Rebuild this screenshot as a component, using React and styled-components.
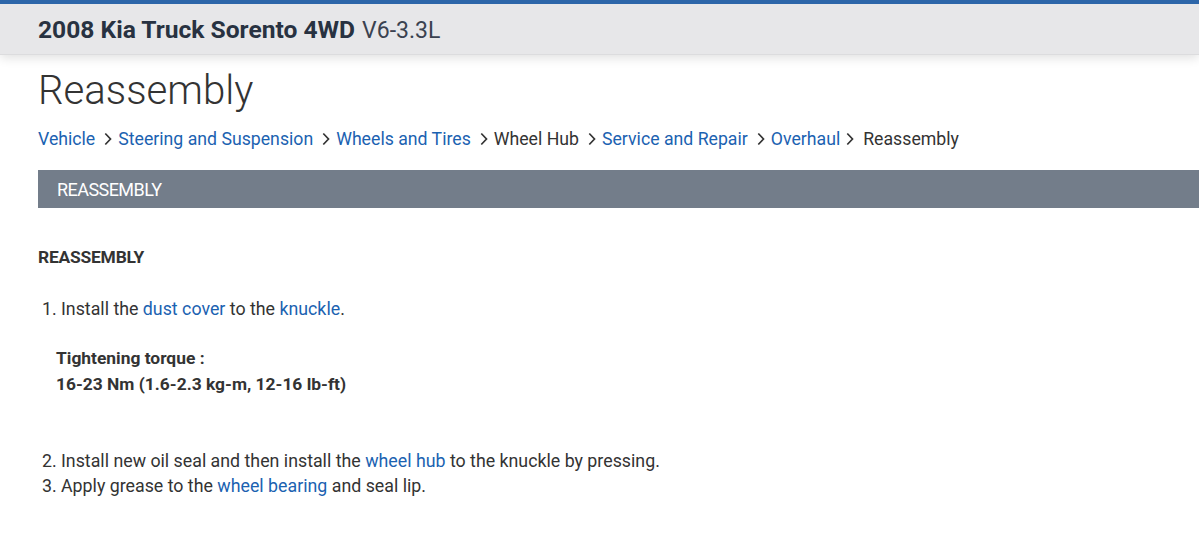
import React from "react";
import styled, { createGlobalStyle } from "styled-components";

const Global = createGlobalStyle`
  html, body { margin: 0; padding: 0; background: #fff; }
  body { font-family: Roboto, "Noto Sans", sans-serif; color: #333; overflow: hidden; }
`;

const Header = styled.header`
  border-top: 4px solid #2d66a9;
  background: #e7e7e9;
  height: 55px;
  box-sizing: border-box;
  display: flex;
  align-items: center;
  padding: 0 0 0 38px;
  box-shadow: 0 3px 10px rgba(0, 0, 0, 0.12);
  border-bottom: 1px solid #dcdcde;
`;

const Vehicle = styled.h1`
  margin: 0;
  font-size: 24.6px;
  font-weight: 700;
  color: #283241;
  letter-spacing: 0;
`;

const Engine = styled.span`
  font-weight: 400;
  font-size: 23px;
  color: #3a4250;
  margin-left: 7px;
`;

const Main = styled.main`
  padding: 12px 0 0 38px;
`;

const Title = styled.h2`
  margin: 0;
  font-size: 40.2px;
  font-weight: 300;
  color: #333;
  line-height: 48px;
`;

const Crumbs = styled.nav`
  display: flex;
  align-items: center;
  margin-top: 12px;
  font-size: 17.7px;
  line-height: 24px;
  height: 24px;
`;

const Crumb = styled.a`
  color: ${(p) => (p.$current ? "#333" : "#1b62b1")};
  text-decoration: none;
`;

const Sep = styled.span`
  display: inline-flex;
  align-items: center;
  margin: ${(p) => p.$m || "0 6px 0 9px"};
  color: #333;
`;

const SectionBar = styled.div`
  margin-top: 19px;
  height: 38px;
  background: #737d8a;
  color: #fff;
  display: flex;
  align-items: center;
  padding-left: 19px;
  font-size: 18px;
  letter-spacing: -0.55px;
`;

const Body = styled.section`
  padding-top: 39px;
  font-size: 17.8px;
  color: #333;
`;

const SubHead = styled.h3`
  margin: 0;
  font-size: 17.4px;
  font-weight: 700;
  line-height: 20px;
  letter-spacing: -0.2px;
`;

const List = styled.ol`
  margin: ${(p) => p.$m || "0"};
  padding-left: 23px;
  line-height: 25px;
`;

const Item = styled.li`
  padding-left: 0;
`;

const Link = styled.a`
  color: #1b62b1;
  text-decoration: none;
`;

const Note = styled.div`
  margin: 24px 0 0 18px;
  font-size: 17.4px;
  font-weight: 700;
  line-height: 26px;
`;

const Chevron = () => (
  <svg width="8" height="14" viewBox="0 0 8 14" fill="none">
    <path d="M1.3 1.5 L6.5 7 L1.3 12.5" stroke="#333" strokeWidth="1.7" />
  </svg>
);

const crumbs = [
  { t: "Vehicle", link: true },
  { t: "Steering and Suspension", link: true },
  { t: "Wheels and Tires", link: true },
  { t: "Wheel Hub", link: false },
  { t: "Service and Repair", link: true },
  { t: "Overhaul", link: true },
  { t: "Reassembly", link: false, last: true },
];

export default function App() {
  return (
    <>
      <Global />
      <Header>
        <Vehicle>
          2008 Kia Truck Sorento 4WD<Engine>V6-3.3L</Engine>
        </Vehicle>
      </Header>
      <Main>
        <Title>Reassembly</Title>
        <Crumbs>
          {crumbs.map((c, i) => (
            <React.Fragment key={c.t}>
              {i > 0 && (
                <Sep $m={c.last ? "0 9px 0 6px" : undefined}>
                  <Chevron />
                </Sep>
              )}
              <Crumb $current={!c.link}>{c.t}</Crumb>
            </React.Fragment>
          ))}
        </Crumbs>
        <SectionBar>REASSEMBLY</SectionBar>
        <Body>
          <SubHead>REASSEMBLY</SubHead>
          <List $m="29px 0 0 0">
            <Item>
              Install the <Link>dust cover</Link> to the <Link>knuckle</Link>.
            </Item>
          </List>
          <Note>
            Tightening torque :
            <br />
            16-23 Nm (1.6-2.3 kg-m, 12-16 lb-ft)
          </Note>
          <List start={2} $m="51px 0 0 0">
            <Item>
              Install new oil seal and then install the <Link>wheel hub</Link> to the knuckle by pressing.
            </Item>
            <Item>
              Apply grease to the <Link>wheel bearing</Link> and seal lip.
            </Item>
          </List>
        </Body>
      </Main>
    </>
  );
}
